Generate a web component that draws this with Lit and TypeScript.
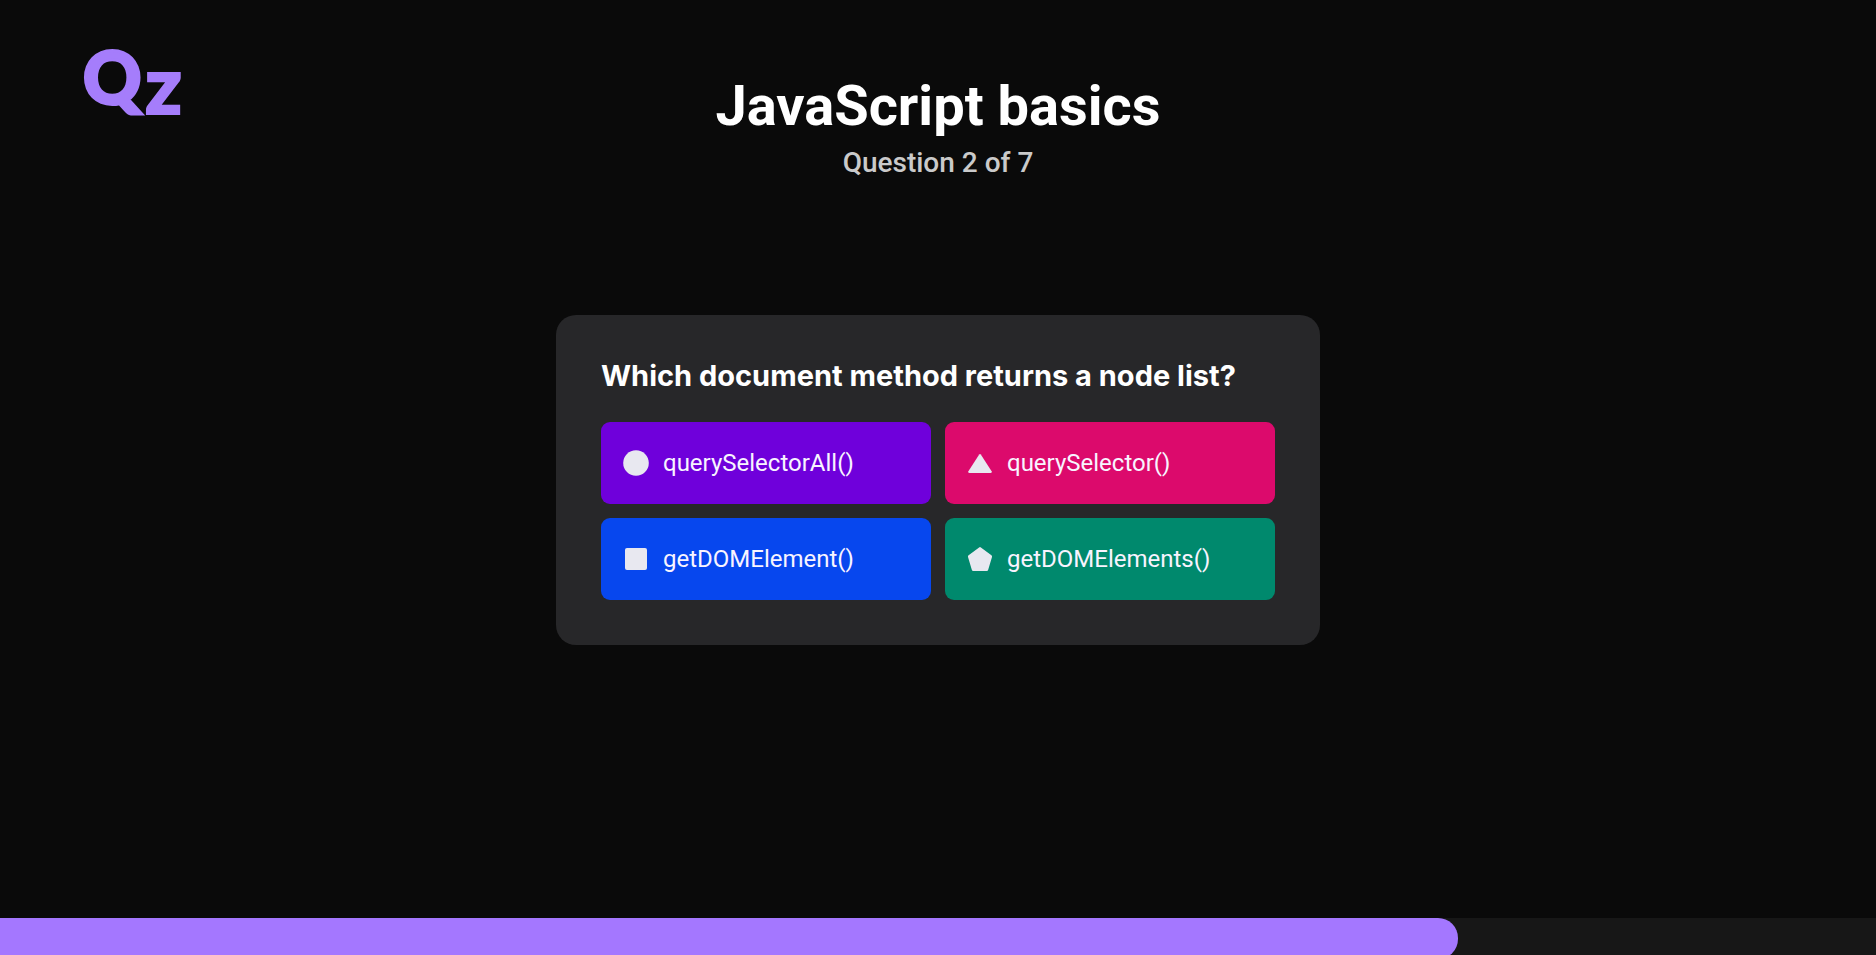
import { LitElement, html, css, svg } from "lit";
import { customElement, property, state } from "lit/decorators.js";
import { classMap } from "lit/directives/class-map.js";
import { styleMap } from "lit/directives/style-map.js";

type Shape = "circle" | "triangle" | "square" | "pentagon";

interface Answer {
  shape: Shape;
  text: string;
}

const SHAPES = {
  circle: svg`<circle cx="13" cy="13" r="12.8" />`,
  triangle: svg`<path d="M12.2 4.5Q13 3.3 13.8 4.5L24.6 21.2Q25.4 22.9 23.7 22.9H2.3Q.6 22.9 1.4 21.2Z" />`,
  square: svg`<rect x="2" y="2" width="22" height="22" rx="2" />`,
  pentagon: svg`<path d="M12.1 1.4Q13 .7 13.9 1.4L24.4 9.2Q25.3 9.9 25 10.9L21.2 23.7Q20.9 24.9 19.7 24.9H6.3Q5.1 24.9 4.8 23.7L1 10.9Q.7 9.9 1.6 9.2Z" />`,
};

@customElement("answer-option")
class AnswerOption extends LitElement {
  @property() shape: Shape = "circle";
  @property() text = "";

  static styles = css`
    :host {
      display: block;
    }
    .option {
      display: flex;
      align-items: center;
      gap: 14px;
      width: 100%;
      padding: 26px 22px;
      border: 0;
      border-radius: 9px;
      color: #f8f4ff;
      font: 400 24px/30px Roboto, sans-serif;
      text-align: left;
      cursor: pointer;
    }
    .option:hover {
      filter: brightness(1.1);
    }
    .circle {
      background: #6f00db;
    }
    .triangle {
      background: #dc0a6c;
    }
    .square {
      background: #0747ee;
    }
    .pentagon {
      background: #00896d;
    }
    .icon {
      flex: none;
      width: 26px;
      height: 26px;
      fill: #e8e8f0;
    }
  `;

  render() {
    return html`<button type="button" class=${classMap({ option: true, [this.shape]: true })}>
      <svg class="icon" viewBox="0 0 26 26" aria-hidden="true">${SHAPES[this.shape]}</svg>
      <span>${this.text}</span>
    </button>`;
  }
}

@customElement("app-root")
class AppRoot extends LitElement {
  @state() private current = 2;
  @state() private total = 7;
  @state() private timeLeft = 77.7;

  private answers: Answer[] = [
    { shape: "circle", text: "querySelectorAll()" },
    { shape: "triangle", text: "querySelector()" },
    { shape: "square", text: "getDOMElement()" },
    { shape: "pentagon", text: "getDOMElements()" },
  ];

  static styles = css`
    :host {
      display: flex;
      flex-direction: column;
      min-height: 100vh;
      background: #0a0a0a;
      color: #fff;
      font-family: Roboto, sans-serif;
    }
    .header {
      display: grid;
      grid-template-columns: 1fr auto 1fr;
      align-items: start;
      padding: 24px 80px 0;
    }
    .logo {
      display: block;
      justify-self: start;
    }
    .mark {
      display: block;
      width: 116px;
      height: 120px;
      fill: #a57dfb;
      stroke: #a57dfb;
      stroke-width: 3px;
      stroke-linejoin: miter;
      font-family: Lato, sans-serif;
      font-weight: 900;
    }
    .q {
      font-size: 72px;
    }
    .z {
      font-size: 80px;
      stroke-width: 2px;
    }
    .titles {
      padding-top: 49px;
      text-align: center;
    }
    .title {
      margin: 0;
      font-size: 56px;
      line-height: 66px;
      font-weight: 700;
    }
    .progress {
      margin: 8px 0 0;
      color: #cacaca;
      font-size: 28px;
      line-height: 32px;
      font-weight: 500;
    }
    .main {
      display: flex;
      justify-content: center;
      padding: 136px 24px 40px;
    }
    .card {
      box-sizing: border-box;
      width: 100%;
      max-width: 764px;
      padding: 45px;
      border-radius: 20px;
      background: #272729;
    }
    .question {
      margin: 0 0 30px;
      font: 700 29px/32px Inter, sans-serif;
    }
    .answers {
      display: grid;
      grid-template-columns: repeat(auto-fit, minmax(280px, 1fr));
      gap: 14px;
    }
    .timer {
      height: 37px;
      margin-top: auto;
      overflow: hidden;
      background: #171717;
    }
    .elapsed {
      height: 41px;
      border-radius: 0 20px 20px 0;
      background: #a477ff;
    }
  `;

  render() {
    return html`
      <header class="header">
        <a class="logo" href="#" aria-label="Qz home">
          <svg class="mark" viewBox="0 0 116 120">
            <text class="q" x="3" y="80">Q</text>
            <text class="z" x="65" y="90">z</text>
          </svg>
        </a>
        <div class="titles">
          <h1 class="title">JavaScript basics</h1>
          <p class="progress">Question ${this.current} of ${this.total}</p>
        </div>
      </header>
      <main class="main">
        <section class="card">
          <h2 class="question">Which document method returns a node list?</h2>
          <div class="answers">
            ${this.answers.map(
              (a) => html`<answer-option .shape=${a.shape} .text=${a.text}></answer-option>`
            )}
          </div>
        </section>
      </main>
      <div class="timer" role="progressbar" aria-label="Time" aria-valuenow=${this.timeLeft}>
        <div class="elapsed" style=${styleMap({ width: `${this.timeLeft}%` })}></div>
      </div>
    `;
  }
}
